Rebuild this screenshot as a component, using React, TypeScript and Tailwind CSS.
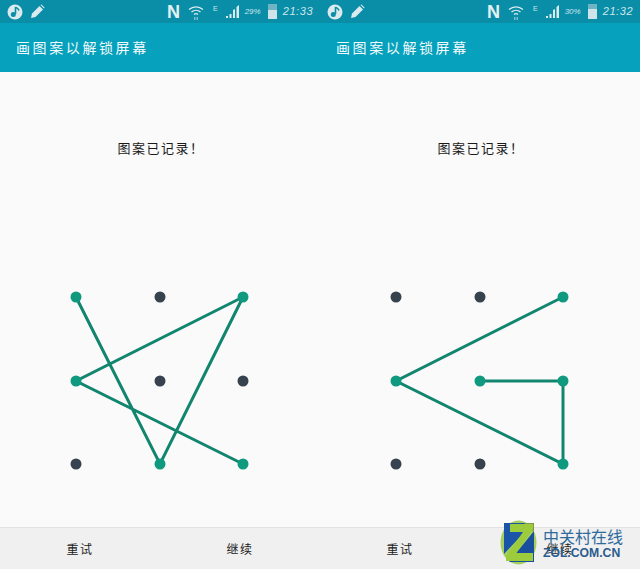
type Pt = [number, number];

const cols = [76, 160, 243];
const rows = [41, 125, 208];

// each pattern is the drawn path, in grid coordinates of one panel
const patterns: { path: Pt[]; time: string; battery: string; level: string }[] = [
  {
    path: [
      [0, 0],
      [1, 2],
      [2, 0],
      [0, 1],
      [2, 2],
    ],
    time: '21:33',
    battery: '29%',
    level: 'h-[9px]',
  },
  {
    path: [
      [2, 0],
      [0, 1],
      [2, 2],
      [2, 1],
      [1, 1],
    ],
    time: '21:32',
    battery: '30%',
    level: 'h-[10px]',
  },
];

function StatusBar({ time, battery, level }: { time: string; battery: string; level: string }) {
  return (
    <div className="flex h-[23px] items-center bg-[#0a8ea8] text-[#cfe6ec]">
      {/* music note badge */}
      <svg width="16" height="16" viewBox="0 0 16 16" className="ml-[7px]">
        <circle cx="8" cy="8" r="7.5" fill="#dbeaee" />
        <path d="M8.500 3v7" stroke="#0a8ea8" strokeWidth="1.6" />
        <path d="M8.500 3c1.500 1 3 1.500 3.500 3.500" stroke="#0a8ea8" strokeWidth="1.4" fill="none" />
        <circle cx="6.300" cy="10.500" r="2.500" fill="#0a8ea8" />
      </svg>
      {/* pencil */}
      <svg width="15" height="15" viewBox="0 0 15 15" className="ml-[7px]" fill="#dbeaee">
        <path d="M1 14l1-4.500L9.500 2l3.500 3.500L5.500 13z" />
        <path d="M10.500 1l1-.5 3 3-.5 1z" />
      </svg>
      <span className="ml-[122px] w-[14px] text-[18px] leading-none font-bold font-['Liberation_Sans',sans-serif] text-[#e4f0f3]">
        N
      </span>
      {/* wifi */}
      <svg width="16" height="16" viewBox="0 0 16 16" fill="none" stroke="#dbeaee" className="ml-[7px]">
        <path d="M1 5.500c4-3.600 10-3.600 14 0" strokeWidth="1.3" />
        <path d="M3.500 8c2.600-2.200 6.400-2.200 9 0" strokeWidth="1.3" />
        <path d="M6 10.400c1.200-.9 2.800-.9 4 0" strokeWidth="1.3" />
        <path d="M6.800 13v3M9.200 13v3" strokeWidth="0.8" />
      </svg>
      <span className="mb-[7px] ml-[9px] text-[7px] leading-none font-['Liberation_Sans',sans-serif]">E</span>
      {/* signal */}
      <svg width="15" height="15" viewBox="0 0 15 15" className="ml-[8px]" fill="#dbeaee">
        <path d="M0 12h2v2H0zM3.500 10h2v4h-2zM7 6l2-1v9H7zM10.500 3l2.500-2v13h-2.500z" />
      </svg>
      <span className="ml-[4px] w-[19px] text-[8px] leading-none italic font-['Liberation_Sans',sans-serif]">{battery}</span>
      {/* battery */}
      <div className="ml-[4px] flex h-[15px] w-[9px] flex-col justify-end bg-[#6fb3c4]">
        <div className={`${level} bg-[#cfe3e8]`} />
      </div>
      <span className="ml-[6px] text-[11px] leading-none tracking-[0.6px] italic font-['Liberation_Sans',sans-serif]">{time}</span>
    </div>
  );
}

function Pattern({ path }: { path: Pt[] }) {
  const on = (c: number, r: number) => path.some(([x, y]) => x === c && y === r);
  return (
    <svg width="320" height="250" viewBox="0 0 320 250" className="mt-[98px]">
      <polyline
        points={path.map(([c, r]) => `${cols[c]},${rows[r]}`).join(' ')}
        fill="none"
        stroke="#12856f"
        strokeWidth="3"
      />
      {rows.map((y, r) =>
        cols.map((x, c) => (
          <circle key={`${r}-${c}`} cx={x} cy={y} r="5.5" fill={on(c, r) ? '#0f9a7f' : '#36434e'} />
        )),
      )}
    </svg>
  );
}

function Panel({ path, time, battery, level }: (typeof patterns)[number]) {
  return (
    <div className="flex h-[569px] w-[320px] flex-col font-['Noto_Sans_CJK_SC',sans-serif]">
      <StatusBar time={time} battery={battery} level={level} />
      <div className="flex h-[49px] items-center bg-[#06a1bd] pl-[16px] text-[14px] tracking-[2.6px] text-[#f2fafb]">
        画图案以解锁屏幕
      </div>
      <div className="flex-1 bg-[#fafafa]">
        <p className="pt-[66px] pl-[2px] text-center text-[13px] leading-[20px] tracking-[1.5px] text-[#1a1a1a]">
          图案已记录！
        </p>
        <Pattern path={path} />
      </div>
      <div className="flex h-[42px] border-t border-[#e2e2e2] bg-[#f0f0f0] text-[12px] tracking-[1.5px] text-[#222]">
        <span className="flex flex-1 items-center justify-center">重试</span>
        <span className="flex flex-1 items-center justify-center">继续</span>
      </div>
    </div>
  );
}

function Watermark() {
  return (
    <div className="absolute top-[520px] left-[500px] flex items-center gap-[6px]">
      <svg width="37" height="45" viewBox="0 0 37 45">
        <ellipse cx="18.500" cy="22.500" rx="18" ry="22" fill="#a5cf5f" />
        <path d="M4 3h29L4 34z" fill="#1a55a8" />
        <path d="M34 11v31H9z" fill="#1a4f9e" />
        <path d="M24 3h10v9z" fill="#7f9a4a" />
        <path d="M10 4h23v5L16 33h17v8H6v-5L23 12H10z" fill="#9ccb3c" />
      </svg>
      <div className="flex flex-col text-[#2f6a9c]">
        <span className="text-[16px] leading-[20px] font-['Noto_Sans_CJK_SC',sans-serif]">中关村在线</span>
        <span className="text-[12.2px] leading-[14px] font-bold font-['Liberation_Sans',sans-serif] text-[#2b5c8e]">ZOL.COM.CN</span>
      </div>
    </div>
  );
}

export default function App() {
  return (
    <div className="relative flex h-[569px] w-[640px] overflow-hidden">
      {patterns.map((p) => (
        <Panel key={p.time} {...p} />
      ))}
      <Watermark />
    </div>
  );
}
